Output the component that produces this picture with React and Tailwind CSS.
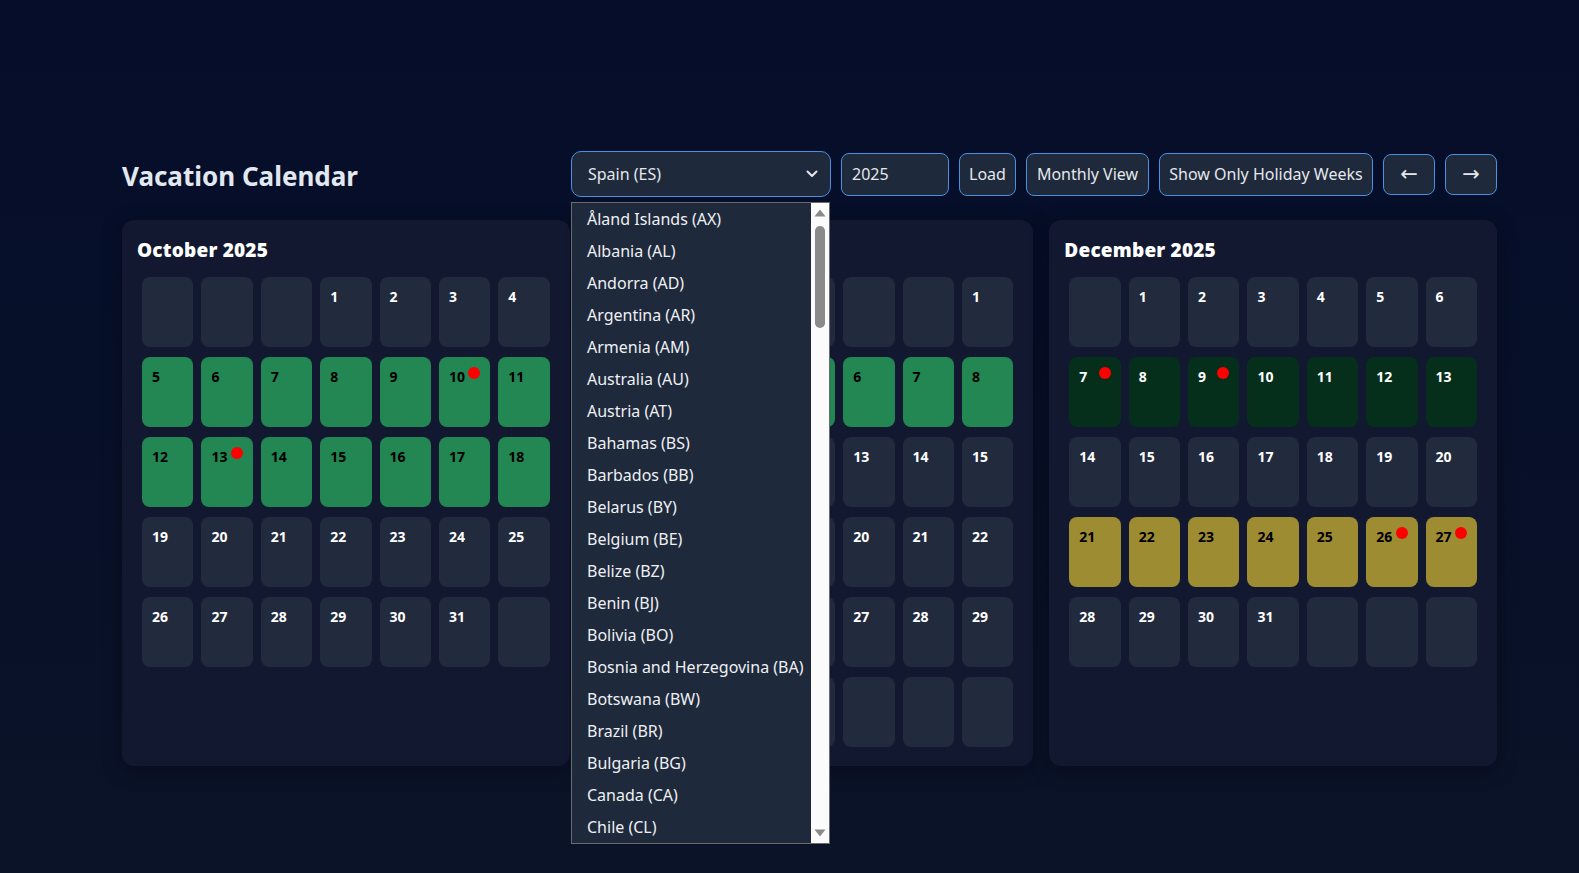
import { useState } from 'react';

const FONT = { fontFamily: '"Noto Sans", "Open Sans", sans-serif' };
const ARROW_FONT = { fontFamily: '"DejaVu Sans", sans-serif' };

const COUNTRIES = [
  'Åland Islands (AX)',
  'Albania (AL)',
  'Andorra (AD)',
  'Argentina (AR)',
  'Armenia (AM)',
  'Australia (AU)',
  'Austria (AT)',
  'Bahamas (BS)',
  'Barbados (BB)',
  'Belarus (BY)',
  'Belgium (BE)',
  'Belize (BZ)',
  'Benin (BJ)',
  'Bolivia (BO)',
  'Bosnia and Herzegovina (BA)',
  'Botswana (BW)',
  'Brazil (BR)',
  'Bulgaria (BG)',
  'Canada (CA)',
  'Chile (CL)',
];

// week index -> tone, plus days marked with a holiday dot
const MONTHS = [
  { name: 'October 2025', offset: 3, days: 31, weeks: { 1: 'green', 2: 'green' }, dots: [10, 13] },
  { name: 'November 2025', offset: 6, days: 30, weeks: { 1: 'green' }, dots: [] },
  { name: 'December 2025', offset: 1, days: 31, weeks: { 1: 'dark', 3: 'gold' }, dots: [7, 9, 26, 27] },
];

const toneClass = {
  none: 'bg-[#222a3e] text-white',
  green: 'bg-[#228752] text-black',
  dark: 'bg-[#052e1b] text-white',
  gold: 'bg-[#9e8c33] text-black',
};

const buildCells = (month) => {
  const cells = [];
  for (let i = 0; i < month.offset; i++) cells.push(null);
  for (let d = 1; d <= month.days; d++) cells.push(d);
  while (cells.length % 7 !== 0) cells.push(null);
  return cells;
};

const MonthCard = ({ month }) => {
  const cells = buildCells(month);
  return (
    <div className="h-[546px] rounded-xl bg-[#111830] shadow-[0_4px_20px_rgba(0,0,0,0.35)]">
      <h2 className="px-[15px] pt-4 text-[19px] leading-7 font-black tracking-[0.2px] text-white">{month.name}</h2>
      <div className="mt-[13px] grid grid-cols-7 gap-x-2 gap-y-2.5 px-5">
        {cells.map((day, idx) => {
          const tone = month.weeks[Math.floor(idx / 7)] || 'none';
          return (
            <div key={idx} className={`relative h-[70px] rounded-lg p-2.5 text-sm leading-5 font-bold ${toneClass[tone]}`}>
              {day}
              {day && month.dots.includes(day) && (
                <span className="absolute top-2.5 right-2.5 h-3 w-3 rounded-full bg-[#ff0000]" />
              )}
            </div>
          );
        })}
      </div>
    </div>
  );
};

const btn = 'h-[43px] rounded-lg border border-[#4b8fe0] bg-[#1e293b] text-base text-[#e5e7eb] flex items-center justify-center';

export default function App() {
  const [open] = useState(true);

  return (
    <div style={FONT} className="min-h-screen bg-gradient-to-b from-[#050d2a] to-[#0b1328] pt-[151px] pb-[60px]">
      <div className="ml-[122px] w-[1375px]">
        <header className="flex items-center justify-between">
          <h1 className="pt-1 text-[26px] font-bold text-[#e2e8f0]">Vacation Calendar</h1>
          <div className="flex items-center gap-2.5">
            <div className="relative">
              <div className="flex h-[46px] w-[260px] items-center justify-between rounded-[10px] border border-[#4b8fe0] bg-[#1e293b] pl-4 pr-3 text-base text-[#e5e7eb]">
                <span>Spain (ES)</span>
                <svg width="12" height="8" viewBox="0 0 12 8" fill="none">
                  <path d="M1.5 1.5l4.5 4.5 4.5-4.5" stroke="#e5e7eb" strokeWidth="2" strokeLinecap="round" strokeLinejoin="round" />
                </svg>
              </div>

              {open && (
                <div className="absolute left-0 top-[51px] z-20 flex h-[642px] w-[259px] border border-[#6b6b6b] bg-[#1e293b]">
                  <ul className="flex-1 overflow-hidden">
                    {COUNTRIES.map((c) => (
                      <li key={c} className="h-8 whitespace-nowrap pl-[15px] text-[16px] leading-8 text-[#eef0f3]">{c}</li>
                    ))}
                  </ul>
                  <div className="flex w-[18px] flex-col items-center bg-[#fbfbfb]">
                    <svg className="mt-[6px]" width="12" height="8" viewBox="0 0 12 8">
                      <path d="M6 0.5L11.5 7.5H0.5Z" fill="#8a8a8a" />
                    </svg>
                    <div className="mt-[9px] h-[102px] w-[10px] rounded-full bg-[#8a8a8a]" />
                    <div className="flex-1" />
                    <svg className="mb-[6px]" width="12" height="8" viewBox="0 0 12 8">
                      <path d="M0.5 0.5H11.5L6 7.5Z" fill="#8a8a8a" />
                    </svg>
                  </div>
                </div>
              )}
            </div>

            <div className="flex h-[43px] w-[108px] items-center rounded-lg border border-[#4b8fe0] bg-[#1e293b] px-2.5 text-base text-[#e5e7eb]">2025</div>
            <button className={`${btn} w-[57px]`}>Load</button>
            <button className={`${btn} w-[123px]`}>Monthly View</button>
            <button className={`${btn} w-[214px]`}>Show Only Holiday Weeks</button>
            <button style={ARROW_FONT} className={`${btn} !h-[41px] w-[52px] !text-[21px] leading-none`}>←</button>
            <button style={ARROW_FONT} className={`${btn} !h-[41px] w-[52px] !text-[21px] leading-none`}>→</button>
          </div>
        </header>

        <div className="mt-[23px] grid grid-cols-3 gap-4">
          {MONTHS.map((m) => (
            <MonthCard key={m.name} month={m} />
          ))}
        </div>
      </div>
    </div>
  );
}
